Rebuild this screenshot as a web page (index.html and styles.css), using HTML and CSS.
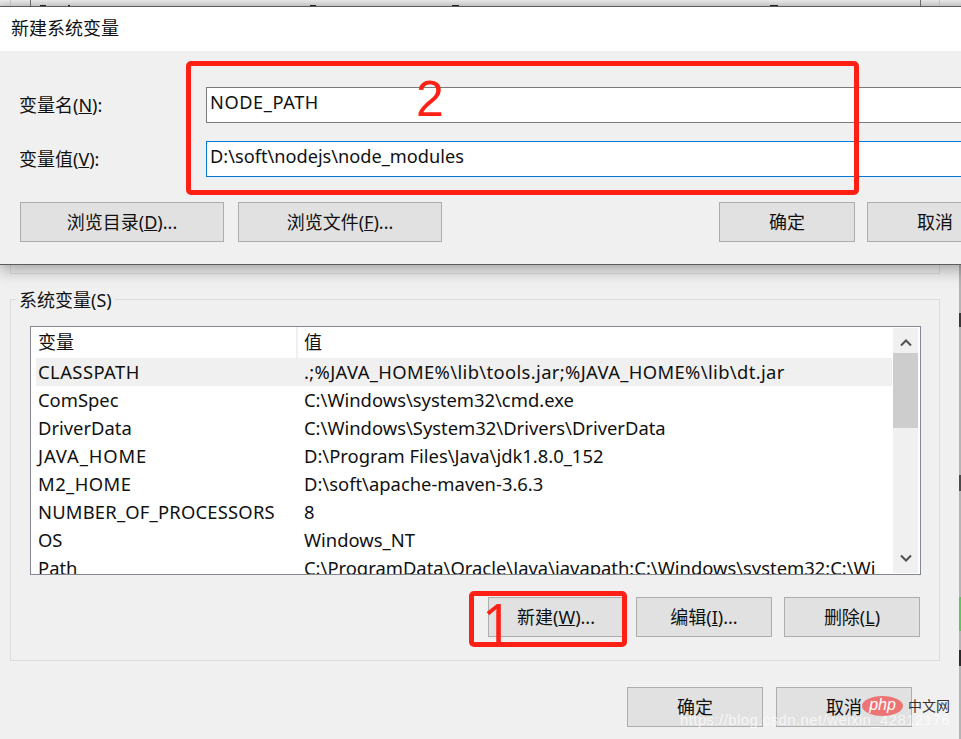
FILE: index.html
```html
<!DOCTYPE html>
<html lang="zh-CN">
<head>
<meta charset="utf-8">
<title>新建系统变量</title>
<link rel="stylesheet" href="styles.css">
</head>
<body>
<div class="screen">
  <div class="backstrip"></div>
  <div class="upper-group"></div>
  <section class="sys-group">
    <span class="legend">系统变量(S)</span>
    <div class="listview">
      <div class="list-main">
        <div class="list-head"><span class="col-a head-a">变量</span><span class="col-b head-b">值</span></div>
        <div class="row selected"><span class="col-a caps">CLASSPATH</span><span class="col-b wide">.;%JAVA_HOME%\lib\tools.jar;%JAVA_HOME%\lib\dt.jar</span></div>
        <div class="row"><span class="col-a">ComSpec</span><span class="col-b">C:\Windows\system32\cmd.exe</span></div>
        <div class="row"><span class="col-a">DriverData</span><span class="col-b">C:\Windows\System32\Drivers\DriverData</span></div>
        <div class="row"><span class="col-a caps-x">JAVA_HOME</span><span class="col-b">D:\Program Files\Java\jdk1.8.0_152</span></div>
        <div class="row"><span class="col-a caps">M2_HOME</span><span class="col-b">D:\soft\apache-maven-3.6.3</span></div>
        <div class="row"><span class="col-a caps-s">NUMBER_OF_PROCESSORS</span><span class="col-b">8</span></div>
        <div class="row"><span class="col-a">OS</span><span class="col-b">Windows_NT</span></div>
        <div class="row"><span class="col-a">Path</span><span class="col-b">C:\ProgramData\Oracle\Java\javapath;C:\Windows\system32;C:\Wi</span></div>
      </div>
      <div class="scrollbar">
        <svg class="arrow" viewBox="0 0 12 8"><path d="M1 6.5 6 1.5 11 6.5" fill="none" stroke="#505050" stroke-width="2"/></svg>
        <div class="track"><div class="thumb"></div></div>
        <svg class="arrow" viewBox="0 0 12 8"><path d="M1 1.5 6 6.5 11 1.5" fill="none" stroke="#505050" stroke-width="2"/></svg>
      </div>
    </div>
    <div class="list-actions">
      <button class="btn btn-small">新建(<u>W</u>)...</button>
      <button class="btn btn-small">编辑(<u>I</u>)...</button>
      <button class="btn btn-small">删除(<u>L</u>)</button>
    </div>
  </section>
  <div class="footer-actions">
    <button class="btn btn-small">确定</button>
    <button class="btn btn-small">取消</button>
  </div>

  <div class="edge-strip"></div>

  <div class="dialog">
    <div class="dialog-title">新建系统变量</div>
    <div class="dialog-body">
      <div class="field first">
        <label class="field-label">变量名(<u>N</u>):</label>
        <div class="input caps-input">NODE_PATH</div>
      </div>
      <div class="field second">
        <label class="field-label">变量值(<u>V</u>):</label>
        <div class="input focused">D:\soft\nodejs\node_modules</div>
      </div>
      <div class="dialog-actions">
        <button class="btn btn-browse">浏览目录(<u>D</u>)...</button>
        <button class="btn btn-browse">浏览文件(<u>F</u>)...</button>
        <div class="ok-group">
          <button class="btn btn-small">确定</button>
          <button class="btn btn-small">取消</button>
        </div>
      </div>
    </div>
  </div>

  <div class="mark mark-fields"></div>
  <div class="mark mark-new"></div>
  <span class="num num-two">2</span>
  <span class="num num-one">1</span>

  <span class="watermark">https://blog.csdn.net/weixin_42812176</span>
  <div class="phpcn"><span class="php-pill">php</span><span class="php-text">中文网</span></div>
</div>
</body>
</html>
```

FILE: styles.css
```css
* { box-sizing: border-box; }
html, body { margin: 0; padding: 0; }
body {
  font-family: "Noto Sans", "Noto Sans CJK SC", sans-serif;
  color: #111;
  background: #f0f0f0;
}
.screen {
  position: relative;
  width: 961px;
  height: 739px;
  overflow: hidden;
  background: #f0f0f0;
  font-size: 18.4px;
}
.backstrip {
  height: 7px;
  background:
    linear-gradient(#70757c, #70757c) 30px 0 / 1px 7px no-repeat,
    linear-gradient(#70757c, #70757c) 920px 0 / 1px 7px no-repeat,
    linear-gradient(#cfcfcf, #cfcfcf) 10px 0 / 1px 7px no-repeat,
    linear-gradient(#cfcfcf, #cfcfcf) 939px 0 / 1px 7px no-repeat,
    linear-gradient(#222, #222) 40px 5px / 6px 1px no-repeat,
    linear-gradient(#222, #222) 68px 5px / 2px 1px no-repeat,
    linear-gradient(#222, #222) 310px 5px / 6px 1px no-repeat,
    linear-gradient(#222, #222) 452px 5px / 7px 1px no-repeat,
    linear-gradient(#222, #222) 770px 5px / 8px 1px no-repeat,
    linear-gradient(#f0f0f0, #d8d8d8);
}
.upper-group {
  height: 267px;
  margin: 0 21px 0 10px;
  border: 1px solid #dcdcdc;
  border-top: 0;
}
.sys-group {
  position: relative;
  height: 362px;
  margin: 25px 21px 0 10px;
  padding: 26px 18px 0 19px;
  border: 1px solid #dcdcdc;
}
.legend {
  position: absolute;
  left: 5px;
  top: -13px;
  padding: 0 3px;
  line-height: 26px;
  background: #f0f0f0;
  font-size: 18px;
}
.listview {
  display: flex;
  height: 249px;
  border: 1px solid #828790;
  background: #fff;
  overflow: hidden;
}
.list-main { flex: 1; padding-left: 5px; min-width: 0; }
.list-head { display: flex; height: 31px; line-height: 31px; font-size: 18px; }
.row { display: flex; height: 28px; line-height: 28px; white-space: nowrap; }
.row.selected { background: #f0f0f0; }
.col-a { width: 261px; padding-left: 2px; flex: none; }
.col-b { padding-left: 7px; }
.caps { letter-spacing: .45px; }
.caps-x { letter-spacing: .9px; }
.caps-s { letter-spacing: .2px; }
.wide { letter-spacing: .36px; }
.head-a { width: 262px; height: 31px; border-right: 2px solid #f0f0f0; }
.head-b { padding-left: 6px; }
.scrollbar {
  width: 28px;
  flex: none;
  display: flex;
  flex-direction: column;
  align-items: center;
  background: #f0f0f0;
  border: solid #fff;
  border-width: 1px 2px 1px 1px;
}
.arrow { width: 12px; height: 8px; flex: none; margin: 11px 0; }
.track { flex: 1; align-self: stretch; margin: -5px 0; }
.thumb { height: 75px; background: #cdcdcd; }
.list-actions {
  display: flex;
  justify-content: flex-end;
  gap: 12px;
  margin: 22px 1px 0 0;
}
.footer-actions {
  display: flex;
  justify-content: flex-end;
  gap: 13px;
  margin: 26px 49px 0 0;
}
.btn {
  height: 40px;
  padding: 0 0 2px;
  border: 1px solid #adadad;
  background: #e1e1e1;
  color: #111;
  font: inherit;
  font-size: 18px;
  flex: none;
}
.btn-small { width: 136px; }
.btn-browse { width: 204px; }

.dialog {
  position: absolute;
  left: -1px;
  top: 6px;
  width: 1100px;
  height: 259px;
  border: 1px solid #5c5c5c;
  background: #f0f0f0;
  box-shadow: 0 4px 16px rgba(0,0,0,.35);
}
.dialog-title {
  height: 44px;
  padding-left: 11px;
  background: #fff;
  line-height: 43px;
  font-size: 18px;
}
.dialog-body { padding: 36px 0 0 19px; }
.field { display: flex; align-items: center; }
.field.second { margin-top: 18px; }
.field-label { width: 187px; flex: none; line-height: 36px; font-size: 18px; }
.input {
  width: 900px;
  height: 36px;
  padding-left: 3px;
  border: 1px solid #7a7a7a;
  background: #fff;
  line-height: 29px;
  font-size: 18.2px;
  white-space: nowrap;
}
.input.caps-input { letter-spacing: .6px; }
.input.focused { border-color: #0078d7; }
.dialog-actions {
  display: flex;
  gap: 14px;
  margin: 25px 0 0 1px;
  width: 983px;
}
.ok-group { display: flex; gap: 12px; margin-left: auto; }

.edge-strip {
  position: absolute;
  right: 0;
  top: 265px;
  bottom: 0;
  width: 2px;
  background:
    linear-gradient(#3a3a3a, #3a3a3a) 0 48px / 2px 14px no-repeat,
    linear-gradient(#4a4a4a, #4a4a4a) 0 210px / 2px 16px no-repeat,
    linear-gradient(#5fc45f, #5fc45f) 0 332px / 2px 34px no-repeat,
    linear-gradient(#2a2a2a, #2a2a2a) 0 385px / 2px 16px no-repeat,
    #b4b4b4;
}

.mark {
  position: absolute;
  border: 5px solid #ff2015;
  border-radius: 5px;
}
.mark-fields { left: 186px; top: 61px; width: 673px; height: 134px; }
.mark-new { left: 469px; top: 591px; width: 158px; height: 56px; }
.num {
  position: absolute;
  color: #ff2015;
  font-family: "Liberation Sans", sans-serif;
  line-height: 1;
}
.num-two { left: 416px; top: 74px; font-size: 50px; }
.num-one { left: 482px; top: 595px; font-size: 53px; font-family: "Noto Sans", sans-serif; }
.watermark {
  position: absolute;
  left: 680px;
  top: 711px;
  font-family: "Liberation Sans", sans-serif;
  font-size: 15px;
  letter-spacing: .4px;
  color: rgba(255,255,255,.7);
  white-space: nowrap;
}
.phpcn { position: absolute; left: 862px; top: 696px; display: flex; align-items: center; gap: 5px; }
.php-pill {
  width: 41px;
  height: 20px;
  border-radius: 50%;
  background: #ec7474;
  color: #fff;
  font-family: "Liberation Sans", sans-serif;
  font-style: italic;
  font-size: 16px;
  line-height: 18px;
  text-align: center;
}
.php-text { font-size: 14px; color: #3a3030; line-height: 20px; }
```
